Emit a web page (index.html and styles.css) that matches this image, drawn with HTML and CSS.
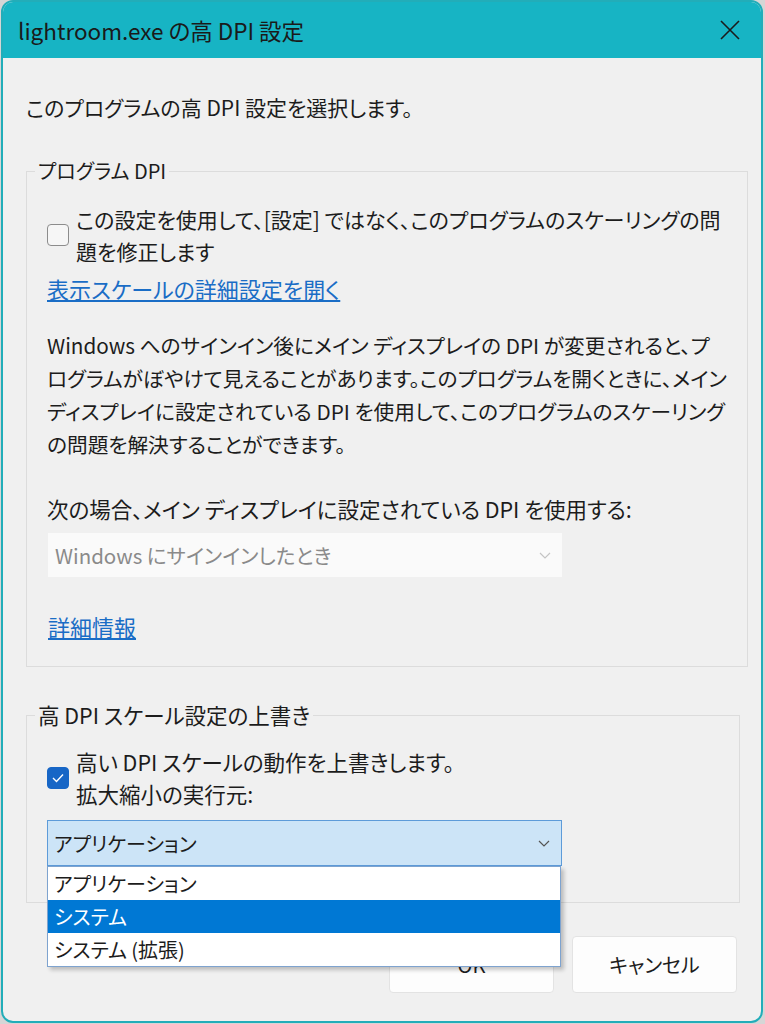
FILE: index.html
```
<!DOCTYPE html>
<html lang="ja">
<head>
    <meta charset="UTF-8">
    <title>lightroom.exe の高 DPI 設定</title>
    <link rel="stylesheet" href="styles.css">
</head>
<body>
    <div class="window">
        <div class="titlebar">
            <span class="title">lightroom.exe の高 DPI 設定</span>
            <button class="close-btn" aria-label="閉じる">
                <svg width="20" height="20" viewBox="0 0 20 20"><path d="M1 1 L19 19 M19 1 L1 19" stroke="#1b1b1b" stroke-width="1.6" fill="none"/></svg>
            </button>
        </div>

        <div class="dialog-body">
            <p class="intro">このプログラムの高 DPI 設定を選択します。</p>

            <fieldset class="group group-program">
                <legend>プログラム DPI</legend>
                <label class="check-row">
                    <span class="checkbox"></span>
                    <span class="check-text">この設定を使用して、[設定] ではなく、このプログラムのスケーリングの問<br>題を修正します</span>
                </label>
                <a class="link link-scale" href="#">表示スケールの詳細設定を開く</a>
                <p class="note">Windows へのサインイン後にメイン ディスプレイの DPI が変更されると、プ<br>ログラムがぼやけて見えることがあります。このプログラムを開くときに、メイン<br>ディスプレイに設定されている DPI を使用して、このプログラムのスケーリング<br>の問題を解決することができます。</p>
                <p class="field-label">次の場合、メイン ディスプレイに設定されている DPI を使用する:</p>
                <div class="combo combo-disabled">
                    <span>Windows にサインインしたとき</span>
                    <svg class="chevron" width="12" height="7" viewBox="0 0 12 7"><path d="M1 1 L6 6 L11 1" stroke="#c4c4c4" stroke-width="1.2" fill="none"/></svg>
                </div>
                <a class="link link-more" href="#">詳細情報</a>
            </fieldset>

            <fieldset class="group group-override">
                <legend>高 DPI スケール設定の上書き</legend>
                <label class="check-row">
                    <span class="checkbox checked">
                        <svg width="12" height="10" viewBox="0 0 12 10"><path d="M1 5 L4.5 8.5 L11 1.5" stroke="#fff" stroke-width="1.4" fill="none"/></svg>
                    </span>
                    <span class="check-text">高い DPI スケールの動作を上書きします。<br>拡大縮小の実行元:</span>
                </label>
                <div class="combo-wrap">
                    <div class="combo combo-open">
                        <span>アプリケーション</span>
                        <svg class="chevron" width="12" height="7" viewBox="0 0 12 7"><path d="M1 1 L6 6 L11 1" stroke="#555" stroke-width="1.2" fill="none"/></svg>
                    </div>
                    <ul class="dropdown">
                        <li>アプリケーション</li>
                        <li class="selected">システム</li>
                        <li>システム (拡張)</li>
                    </ul>
                </div>
            </fieldset>

            <div class="buttons">
                <button class="btn">OK</button>
                <button class="btn">キャンセル</button>
            </div>
        </div>
    </div>
</body>
</html>
```

FILE: styles.css
```
* {
    margin: 0;
    padding: 0;
    box-sizing: border-box;
}

body {
    background-color: #d6d6d6;
    font-family: "Noto Sans CJK JP", "Noto Sans", sans-serif;
    font-feature-settings: "palt";
    color: #1c1c1c;
    font-size: 21px;
}

.window {
    margin-left: 1px;
    width: 762px;
    height: 1023px;
    border: 2px solid #22adb9;
    border-radius: 12px;
    overflow: hidden;
    background-color: #f0f0f0;
}

/* Title bar */
.titlebar {
    height: 56px;
    display: flex;
    align-items: center;
    justify-content: space-between;
    background-color: #17b4c4;
    padding-left: 15px;
}

.title {
    font-size: 22.5px;
    color: #1a1a1a;
}

.close-btn {
    width: 46px;
    height: 46px;
    margin-right: 8px;
    border: none;
    background: none;
    display: flex;
    align-items: center;
    justify-content: center;
}

/* Body */
.dialog-body {
    padding: 33px 21px 0 23px;
}

.intro {
    line-height: 32px;
}

.group {
    border: 1px solid #dcdcdc;
    margin-top: 34px;
    padding: 18px 20px 24px 20px;
}

.group legend {
    margin-left: -12px;
    padding: 0 3px;
    line-height: 28px;
}

.group-program legend {
    font-size: 20px;
}

.group-override {
    padding-top: 17px;
    padding-bottom: 36px;
}

.group-override legend {
    font-size: 21.5px;
}

.check-row {
    display: flex;
    align-items: center;
    gap: 7px;
}

.check-text {
    line-height: 32px;
    white-space: nowrap;
}

.group-override .check-text {
    font-size: 21.5px;
}

.checkbox {
    width: 22px;
    height: 22px;
    border: 1px solid #8c8c8c;
    border-radius: 4px;
    background-color: #f6f6f6;
    display: flex;
    align-items: center;
    justify-content: center;
    flex-shrink: 0;
}

.checkbox.checked {
    background-color: #1766c6;
    border-color: #1766c6;
}

.link {
    display: block;
    width: max-content;
    color: #1a6dc6;
    text-decoration: underline;
    line-height: 32px;
    font-size: 22px;
}

.link-scale {
    margin-top: 5px;
}

.note {
    margin-top: 25px;
    line-height: 33px;
    white-space: nowrap;
    font-size: 20.7px;
}

.field-label {
    margin-top: 32px;
    line-height: 32px;
    font-size: 21.5px;
}

.combo {
    display: flex;
    align-items: center;
    justify-content: space-between;
    padding: 0 11px 0 7px;
}

.combo-disabled {
    margin-top: 8px;
    width: 514px;
    height: 44px;
    margin-left: 1px;
    background-color: #fafafa;
    color: #8a8a8a;
    font-size: 20.5px;
}

.link-more {
    margin-top: 33px;
    margin-left: 1px;
}

.combo-wrap {
    position: relative;
    margin-top: 10px;
    width: 515px;
    font-size: 20px;
}

.combo-open {
    height: 46px;
    border: 1px solid #5d9bd9;
    background-color: #cce4f7;
    padding-left: 6px;
}

.dropdown {
    position: absolute;
    top: 100%;
    left: 0;
    width: 514px;
    list-style: none;
    background-color: #fff;
    border: 1px solid #7ea3cf;
    box-shadow: 3px 3px 4px rgba(0, 0, 0, 0.22);
    z-index: 2;
}

.dropdown li {
    height: 33px;
    line-height: 33px;
    padding-left: 6px;
}

.dropdown li.selected {
    background-color: #0078d4;
    color: #fff;
}

/* Buttons */
.buttons {
    display: flex;
    justify-content: flex-end;
    gap: 18px;
    margin-top: 33px;
    margin-right: 3px;
}

.btn {
    width: 165px;
    height: 57px;
    border: 1px solid #e3e3e3;
    border-radius: 4px;
    background-color: #fdfdfd;
    font-family: inherit;
    font-feature-settings: "palt";
    font-size: 20px;
    color: #1c1c1c;
}
```
